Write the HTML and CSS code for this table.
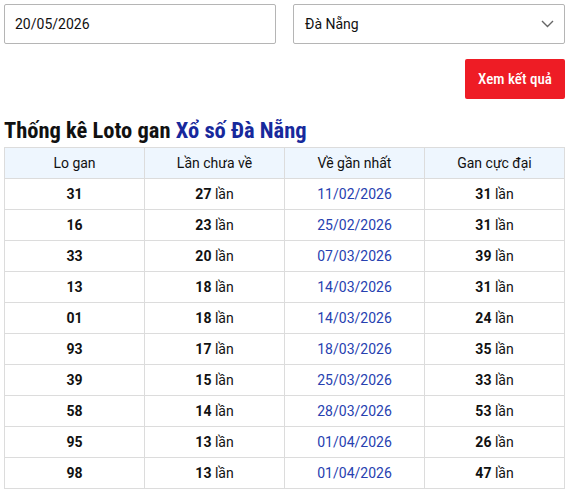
FILE: index.html
```html
<!DOCTYPE html>
<html lang="vi">
<head>
<meta charset="utf-8">
<link rel="stylesheet" href="styles.css">
</head>
<body>
<div class="page">
  <form class="filters">
    <div class="field"><input class="input" type="text" value="20/05/2026"></div>
    <div class="field select">
      <span class="select-text">Đà Nẵng</span>
      <svg class="chevron" width="13" height="8" viewBox="0 0 13 8"><path d="M1 1l5.5 5.5L12 1" fill="none" stroke="#666" stroke-width="1.4"/></svg>
    </div>
  </form>
  <div class="actions"><button class="btn" type="button">Xem kết quả</button></div>
  <h2 class="title">Thống kê Loto gan <span class="blue">Xổ số Đà Nẵng</span></h2>
  <table class="stats">
    <thead>
      <tr><th>Lo gan</th><th>Lần chưa về</th><th>Về gần nhất</th><th>Gan cực đại</th></tr>
    </thead>
    <tbody>
      <tr><td><b>31</b></td><td><b>27</b> lần</td><td class="date">11/02/2026</td><td><b>31</b> lần</td></tr>
      <tr><td><b>16</b></td><td><b>23</b> lần</td><td class="date">25/02/2026</td><td><b>31</b> lần</td></tr>
      <tr><td><b>33</b></td><td><b>20</b> lần</td><td class="date">07/03/2026</td><td><b>39</b> lần</td></tr>
      <tr><td><b>13</b></td><td><b>18</b> lần</td><td class="date">14/03/2026</td><td><b>31</b> lần</td></tr>
      <tr><td><b>01</b></td><td><b>18</b> lần</td><td class="date">14/03/2026</td><td><b>24</b> lần</td></tr>
      <tr><td><b>93</b></td><td><b>17</b> lần</td><td class="date">18/03/2026</td><td><b>35</b> lần</td></tr>
      <tr><td><b>39</b></td><td><b>15</b> lần</td><td class="date">25/03/2026</td><td><b>33</b> lần</td></tr>
      <tr><td><b>58</b></td><td><b>14</b> lần</td><td class="date">28/03/2026</td><td><b>53</b> lần</td></tr>
      <tr><td><b>95</b></td><td><b>13</b> lần</td><td class="date">01/04/2026</td><td><b>26</b> lần</td></tr>
      <tr><td><b>98</b></td><td><b>13</b> lần</td><td class="date">01/04/2026</td><td><b>47</b> lần</td></tr>
    </tbody>
  </table>
</div>
</body>
</html>
```
FILE: styles.css
```css
* { box-sizing: border-box; }
html, body { margin: 0; padding: 0; background: #fff; }
body { font-family: Roboto, "Liberation Sans", sans-serif; color: #111; font-size: 14px; }
.page { padding: 4px 5px 0 4px; }
.filters { display: grid; grid-template-columns: 272px 272px; column-gap: 17px; }
.field { height: 40px; border: 1px solid #b5b5b5; border-radius: 2px; background: #fff; }
.input { width: 100%; height: 100%; border: 0; outline: 0; background: transparent; padding: 0 10px; font: 14px Roboto, sans-serif; color: #111; }
.select { display: flex; align-items: center; justify-content: space-between; padding: 0 10px 0 11px; }
.select-text { font-size: 14px; color: #111; }
.chevron { display: block; }
.actions { display: flex; justify-content: flex-end; margin-top: 15px; }
.btn { width: 100px; height: 40px; border: 0; border-radius: 2px; background: #ee1c25; color: #fff; font: 500 15px Roboto, sans-serif; font-stretch: 80%; padding: 0; }
.title { margin: 14px 0 0; font-size: 22.5px; font-weight: 700; font-stretch: 86%; line-height: 34px; height: 34px; color: #111; }
.blue { color: #17299c; }
.stats { width: 561px; border-collapse: collapse; table-layout: fixed; }
.stats th, .stats td { border: 1px solid #dcdcdc; height: 31px; text-align: center; padding: 0; font-size: 14px; }
.stats th { background: #eef6fe; font-weight: 400; color: #111; }
.stats td b { font-weight: 700; }
.stats td.date { color: #2741b0; }
```
